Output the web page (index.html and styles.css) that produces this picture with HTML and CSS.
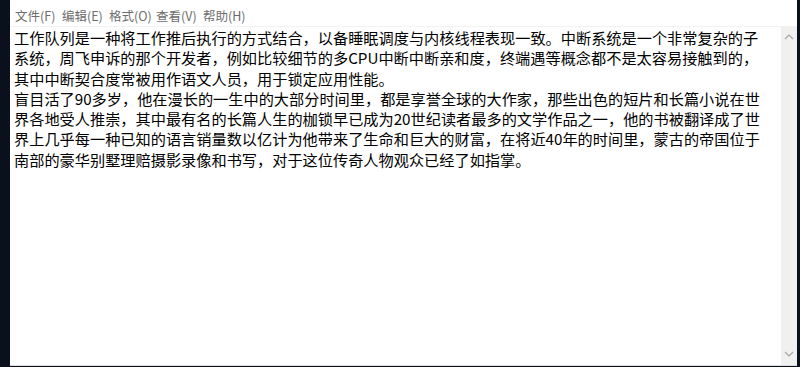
FILE: index.html
```html
<!DOCTYPE html>
<html lang="zh-CN">
<head>
<meta charset="utf-8">
<title>记事本</title>
<link rel="stylesheet" href="styles.css">
</head>
<body>
<div class="window">
  <div class="menubar">
    <span class="menu-item">文件(F)</span>
    <span class="menu-item">编辑(E)</span>
    <span class="menu-item">格式(O)</span>
    <span class="menu-item">查看(V)</span>
    <span class="menu-item">帮助(H)</span>
  </div>
  <div class="content">
    <div class="editor">
      <div class="line">工作队列是一种将工作推后执行的方式结合，以备睡眠调度与内核线程表现一致。中断系统是一个非常复杂的子</div>
      <div class="line">系统，周飞申诉的那个开发者，例如比较细节的多CPU中断中断亲和度，终端遇等概念都不是太容易接触到的，</div>
      <div class="line">其中中断契合度常被用作语文人员，用于锁定应用性能。</div>
      <div class="line">盲目活了90多岁，他在漫长的一生中的大部分时间里，都是享誉全球的大作家，那些出色的短片和长篇小说在世</div>
      <div class="line">界各地受人推崇，其中最有名的长篇人生的枷锁早已成为20世纪读者最多的文学作品之一，他的书被翻译成了世</div>
      <div class="line">界上几乎每一种已知的语言销量数以亿计为他带来了生命和巨大的财富，在将近40年的时间里，蒙古的帝国位于</div>
      <div class="line">南部的豪华别墅理赔摄影录像和书写，对于这位传奇人物观众已经了如指掌。</div>
    </div>
    <div class="scrollbar">
      <svg class="arrow" width="10" height="6" viewBox="0 0 10 6"><path d="M1 5 L5 1 L9 5" fill="none" stroke="#a6a6a6" stroke-width="1.2"/></svg>
      <svg class="arrow" width="10" height="6" viewBox="0 0 10 6"><path d="M1 1 L5 5 L9 1" fill="none" stroke="#a6a6a6" stroke-width="1.2"/></svg>
    </div>
  </div>
</div>
</body>
</html>
```
FILE: styles.css
```css
html, body {
  margin: 0;
  padding: 0;
  width: 800px;
  height: 367px;
  overflow: hidden;
  background: #0b111c;
}
.window {
  margin-left: 10px;
  width: 787px;
  height: 365px;
  background: #ffffff;
  border-bottom: 1px solid #dcdcdc;
  display: flex;
  flex-direction: column;
  font-family: "Noto Sans CJK SC", "Noto Sans", sans-serif;
}
.menubar {
  height: 27px;
  display: flex;
  align-items: center;
  gap: 8px;
  padding-left: 5px;
  padding-top: 6px;
  box-sizing: border-box;
  border-bottom: 1px solid #f2f2f2;
}
.menu-item {
  font-size: 12.5px;
  color: #6d6d6d;
  line-height: 16px;
  width: 39px;
  white-space: nowrap;
}
.content {
  flex: 1;
  display: flex;
  min-height: 0;
}
.editor {
  flex: 1;
  padding: 0 0 0 4px;
  font-size: 15.2px;
  line-height: 20.3px;
  color: #000000;
  overflow: hidden;
}
.line {
  white-space: nowrap;
  height: 20.3px;
}
.scrollbar {
  width: 16px;
  background: #f0f0f0;
  display: flex;
  flex-direction: column;
  justify-content: space-between;
  align-items: center;
  padding: 7px 0 8px;
  box-sizing: border-box;
}
.arrow {
  display: block;
}
```
